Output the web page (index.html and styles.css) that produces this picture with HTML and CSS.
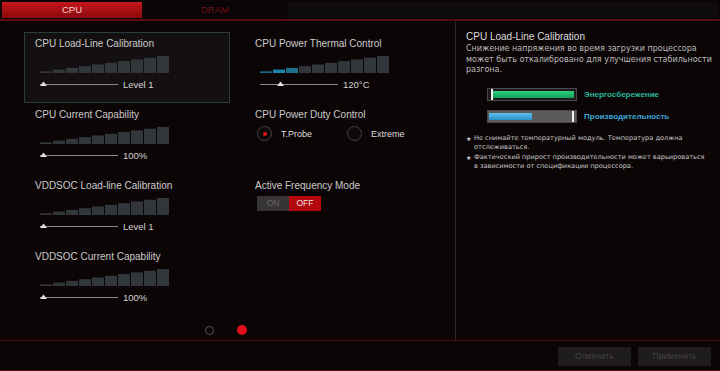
FILE: index.html
```html
<!DOCTYPE html>
<html>
<head>
<meta charset="utf-8">
<link rel="stylesheet" href="styles.css">
</head>
<body>
<div class="app">
  <div class="tabs">
    <div class="tab active">CPU</div>
    <div class="tab">DRAM</div>
    <div class="tab-rest"></div>
  </div>
  <div class="main">
    <div class="left">
      <div class="grid">
        <div class="col">
          <div class="item selected">
            <div class="title">CPU Load-Line Calibration</div>
            <svg class="bars" width="129" height="17" viewBox="0 0 129 17"><g fill="#32373b"><rect x="0" y="15.3" width="12" height="1.7"/><rect x="13" y="13.6" width="12" height="3.4"/><rect x="26" y="11.9" width="12" height="5.1"/><rect x="39" y="10.2" width="12" height="6.8"/><rect x="52" y="8.5" width="12" height="8.5"/><rect x="65" y="6.8" width="12" height="10.2"/><rect x="78" y="5.1" width="12" height="11.9"/><rect x="91" y="3.4" width="12" height="13.6"/><rect x="104" y="1.7" width="12" height="15.3"/><rect x="117" y="0" width="12" height="17"/></g></svg>
            <div class="slider"><svg width="78" height="8" viewBox="0 0 78 8"><line x1="0" y1="5.5" x2="78" y2="5.5" stroke="#8a8a8a" stroke-width="1"/><polygon points="0,7 3.5,2.5 7,7" fill="#e0e0e0"/></svg><span class="val">Level 1</span></div>
          </div>
          <div class="item">
            <div class="title">CPU Current Capability</div>
            <svg class="bars" width="129" height="17" viewBox="0 0 129 17"><g fill="#32373b"><rect x="0" y="15.3" width="12" height="1.7"/><rect x="13" y="13.6" width="12" height="3.4"/><rect x="26" y="11.9" width="12" height="5.1"/><rect x="39" y="10.2" width="12" height="6.8"/><rect x="52" y="8.5" width="12" height="8.5"/><rect x="65" y="6.8" width="12" height="10.2"/><rect x="78" y="5.1" width="12" height="11.9"/><rect x="91" y="3.4" width="12" height="13.6"/><rect x="104" y="1.7" width="12" height="15.3"/><rect x="117" y="0" width="12" height="17"/></g></svg>
            <div class="slider"><svg width="78" height="8" viewBox="0 0 78 8"><line x1="0" y1="5.5" x2="78" y2="5.5" stroke="#8a8a8a" stroke-width="1"/><polygon points="0,7 3.5,2.5 7,7" fill="#e0e0e0"/></svg><span class="val">100%</span></div>
          </div>
          <div class="item">
            <div class="title">VDDSOC Load-line Calibration</div>
            <svg class="bars" width="129" height="17" viewBox="0 0 129 17"><g fill="#32373b"><rect x="0" y="15.3" width="12" height="1.7"/><rect x="13" y="13.6" width="12" height="3.4"/><rect x="26" y="11.9" width="12" height="5.1"/><rect x="39" y="10.2" width="12" height="6.8"/><rect x="52" y="8.5" width="12" height="8.5"/><rect x="65" y="6.8" width="12" height="10.2"/><rect x="78" y="5.1" width="12" height="11.9"/><rect x="91" y="3.4" width="12" height="13.6"/><rect x="104" y="1.7" width="12" height="15.3"/><rect x="117" y="0" width="12" height="17"/></g></svg>
            <div class="slider"><svg width="78" height="8" viewBox="0 0 78 8"><line x1="0" y1="5.5" x2="78" y2="5.5" stroke="#8a8a8a" stroke-width="1"/><polygon points="0,7 3.5,2.5 7,7" fill="#e0e0e0"/></svg><span class="val">Level 1</span></div>
          </div>
          <div class="item">
            <div class="title">VDDSOC Current Capability</div>
            <svg class="bars" width="129" height="17" viewBox="0 0 129 17"><g fill="#32373b"><rect x="0" y="15.3" width="12" height="1.7"/><rect x="13" y="13.6" width="12" height="3.4"/><rect x="26" y="11.9" width="12" height="5.1"/><rect x="39" y="10.2" width="12" height="6.8"/><rect x="52" y="8.5" width="12" height="8.5"/><rect x="65" y="6.8" width="12" height="10.2"/><rect x="78" y="5.1" width="12" height="11.9"/><rect x="91" y="3.4" width="12" height="13.6"/><rect x="104" y="1.7" width="12" height="15.3"/><rect x="117" y="0" width="12" height="17"/></g></svg>
            <div class="slider"><svg width="78" height="8" viewBox="0 0 78 8"><line x1="0" y1="5.5" x2="78" y2="5.5" stroke="#8a8a8a" stroke-width="1"/><polygon points="0,7 3.5,2.5 7,7" fill="#e0e0e0"/></svg><span class="val">100%</span></div>
          </div>
        </div>
        <div class="col">
          <div class="item">
            <div class="title">CPU Power Thermal Control</div>
            <svg class="bars" width="129" height="17" viewBox="0 0 129 17"><rect x="0" y="15.3" width="12" height="1.7" fill="#14688a"/><rect x="13" y="13.6" width="12" height="3.4" fill="#1889ae"/><rect x="26" y="11.9" width="12" height="5.1" fill="#1d6f8a"/><g fill="#32373b"><rect x="39" y="10.2" width="12" height="6.8"/><rect x="52" y="8.5" width="12" height="8.5"/><rect x="65" y="6.8" width="12" height="10.2"/><rect x="78" y="5.1" width="12" height="11.9"/><rect x="91" y="3.4" width="12" height="13.6"/><rect x="104" y="1.7" width="12" height="15.3"/><rect x="117" y="0" width="12" height="17"/></g></svg>
            <div class="slider"><svg width="78" height="8" viewBox="0 0 78 8"><line x1="0" y1="5.5" x2="78" y2="5.5" stroke="#8a8a8a" stroke-width="1"/><polygon points="17,7 20.5,2.5 24,7" fill="#e0e0e0"/></svg><span class="val">120°C</span></div>
          </div>
          <div class="item">
            <div class="title">CPU Power Duty Control</div>
            <div class="radios">
              <div class="radio on"><span class="dot"></span><span class="rlabel">T.Probe</span></div>
              <div class="radio"><span class="dot"></span><span class="rlabel">Extreme</span></div>
            </div>
          </div>
          <div class="item">
            <div class="title">Active Frequency Mode</div>
            <div class="toggle"><span class="t-on">ON</span><span class="t-off">OFF</span></div>
          </div>
        </div>
      </div>
      <div class="dots"><span class="pg"></span><span class="pg cur"></span></div>
    </div>
    <div class="right">
      <div class="r-title">CPU Load-Line Calibration</div>
      <div class="r-desc">Снижение напряжения во время загрузки процессора может быть откалибровано для улучшения стабильности разгона.</div>
      <div class="legend">
        <div class="lrow">
          <div class="lbar green"><span class="fill"></span><span class="mark"></span></div>
          <span class="ltext g">Энергосбережение</span>
        </div>
        <div class="lrow">
          <div class="lbar blue"><span class="fill"></span><span class="mark"></span></div>
          <span class="ltext b">Производительность</span>
        </div>
      </div>
      <div class="notes">
        <div class="note"><span class="star">★</span><span>Не снимайте температурный модуль. Температура должна отслеживаться.</span></div>
        <div class="note"><span class="star">★</span><span>Фактический прирост производительности может варьироваться в зависимости от спецификации процессора.</span></div>
      </div>
    </div>
  </div>
  <div class="footer">
    <div class="btn">Отменить</div>
    <div class="btn">Применить</div>
  </div>
</div>
</body>
</html>
```
FILE: styles.css
```css
* { box-sizing: border-box; }
html, body { margin: 0; padding: 0; }
body {
  background: #0b0506;
  font-family: "Liberation Sans", Arial, sans-serif;
  color: #cfcfcf;
  width: 720px;
  height: 371px;
  overflow: hidden;
}
.app { width: 720px; }

.tabs {
  display: flex;
  height: 21px;
  padding: 2px 0 0 2px;
  border-bottom: 2px solid #5a0b0e;
}
.tab {
  width: 140px;
  height: 16px;
  font-size: 9.5px;
  line-height: 16px;
  text-align: center;
  color: #6e1013;
  background: #090405;
  margin-right: 3px;
}
.tab.active {
  background: linear-gradient(#c4151b, #8c0a0e);
  color: #f3d6d6;
}
.tab-rest {
  width: 430px;
  height: 16px;
  background: #0e0c0d;
}

.main {
  display: flex;
  height: 320px;
  border-bottom: 1px solid #4f0a0c;
}
.left {
  width: 456px;
  border-right: 1px solid #2e2829;
  padding: 11px 0 0 24px;
}
.grid {
  display: grid;
  grid-template-columns: 206px 206px;
  column-gap: 14px;
}
.item {
  height: 71px;
  border: 1px solid transparent;
  padding: 5px 10px 0 10px;
}
.item.selected {
  background: #141011;
  border-color: #2b3c3e;
}
.title {
  font-size: 10px;
  line-height: 12px;
  color: #cbcbcb;
  white-space: nowrap;
}
.bars {
  display: block;
  margin: 6px 0 0 5px;
}
.slider {
  display: flex;
  align-items: center;
  height: 12px;
  margin: 5px 0 0 5px;
}
.slider svg { display: block; margin-top: -2px; }
.val {
  font-size: 9.5px;
  color: #d2d2d2;
  margin-left: 5px;
}

.radios {
  display: flex;
  margin-top: 5px;
  padding-left: 2px;
  height: 15px;
  align-items: center;
}
.radio {
  display: flex;
  align-items: center;
  width: 90px;
}
.dot {
  width: 15px;
  height: 15px;
  border-radius: 50%;
  border: 1px solid #474344;
  background: #0d0809;
  display: flex;
  align-items: center;
  justify-content: center;
}
.radio.on .dot::after {
  content: "";
  width: 4px;
  height: 4px;
  border-radius: 50%;
  background: #e8121a;
}
.rlabel {
  font-size: 9px;
  color: #dcdcdc;
  margin-left: 9px;
}

.toggle {
  display: flex;
  margin: 4px 0 0 2px;
  width: 64px;
  height: 15px;
  font-size: 8.5px;
  line-height: 15px;
}
.t-on {
  width: 32px;
  text-align: center;
  background: #363434;
  color: #6a6868;
}
.t-off {
  width: 32px;
  text-align: center;
  background: #b3090f;
  color: #f2e0e0;
}

.dots {
  display: flex;
  justify-content: center;
  align-items: center;
  gap: 23px;
  margin-top: 9px;
  padding-right: 27px;
}
.pg {
  width: 9px;
  height: 9px;
  border-radius: 50%;
  border: 1px solid #5a5657;
}
.pg.cur {
  width: 10px;
  height: 10px;
  border: none;
  background: #e2101a;
}

.right {
  flex: 1;
  padding: 10px 8px 0 10px;
}
.r-title {
  font-size: 10px;
  line-height: 12px;
  color: #dedede;
}
.r-desc {
  margin-top: 1px;
  font-family: "DejaVu Sans", sans-serif;
  font-size: 8px;
  line-height: 10.5px;
  color: #bdbdbd;
}
.legend {
  margin: 12px 0 0 21px;
  display: flex;
  flex-direction: column;
  gap: 9px;
}
.lrow {
  display: flex;
  align-items: center;
  height: 13px;
}
.lbar {
  position: relative;
  width: 90px;
  height: 13px;
  border: 1px solid #4a4a4a;
}
.lbar.green { background: #1c1a1b; }
.lbar.blue { background: #5a5a5a; }
.lbar .fill {
  position: absolute;
  top: 2px;
  bottom: 2px;
}
.lbar.green .fill {
  left: 5px;
  right: 2px;
  background: linear-gradient(#2fd07c, #12a058);
}
.lbar.blue .fill {
  left: 1px;
  width: 43px;
  background: linear-gradient(#5cc3ee, #2a8fc8);
}
.lbar .mark {
  position: absolute;
  top: 0;
  bottom: 0;
  width: 2px;
  background: #f2f2f2;
}
.lbar.green .mark { left: 3px; }
.lbar.blue .mark { left: 84px; }
.ltext {
  font-size: 8px;
  font-weight: bold;
  margin-left: 7px;
}
.ltext.g { color: #2ab89e; }
.ltext.b { color: #3ea6d6; }

.notes {
  margin-top: 11px;
  margin-right: 6px;
  display: flex;
  flex-direction: column;
  gap: 1px;
}
.note {
  display: flex;
  font-family: "DejaVu Sans", sans-serif;
  font-size: 6.6px;
  line-height: 9px;
  color: #c8c8c8;
}
.star {
  width: 8px;
  flex: none;
  font-size: 6px;
  color: #d8d8d8;
}

.footer {
  height: 30px;
  border-bottom: 1px solid #4f0a0c;
  display: flex;
  justify-content: flex-end;
  gap: 7px;
  padding: 6px 9px 0 0;
}
.btn {
  width: 73px;
  height: 19px;
  background: #1f1c1d;
  color: #454243;
  font-size: 8.5px;
  line-height: 19px;
  text-align: center;
}
```
